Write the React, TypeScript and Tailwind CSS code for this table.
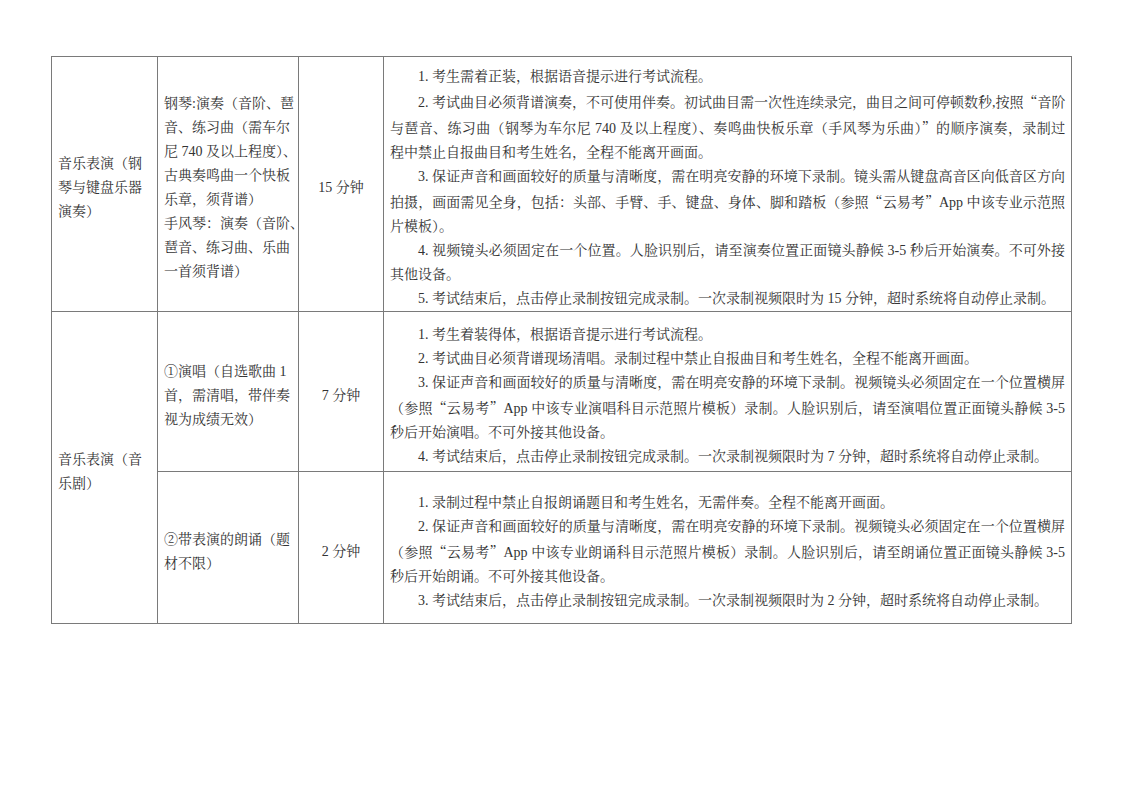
import type { ReactNode } from 'react';

const serif = "font-['Liberation_Serif','Noto_Serif_CJK_SC','Noto_Sans_CJK_SC',serif]";
const cell = 'border border-[#7a7a7a] align-middle px-[6px] pt-[8px] pb-0';

function Q({ c }: { c: string }) {
  return (
    <span className="font-['Noto_Serif_CJK_SC','Noto_Sans_CJK_SC',serif] [font-feature-settings:'fwid']">{c}</span>
  );
}

// one printed line of the notes column
function Line({ children, full, first }: { children: ReactNode; full?: boolean; first?: boolean }) {
  return (
    <div
      className={
        (full ? 'text-justify [text-align-last:justify] ' : '') +
        (first ? 'indent-[28px] ' : '') +
        'whitespace-nowrap'
      }
    >
      {children}
    </div>
  );
}

function Plain({ lines }: { lines: string[] }) {
  return (
    <div>
      {lines.map((l) => (
        <div key={l} className="whitespace-nowrap">
          {l}
        </div>
      ))}
    </div>
  );
}

export default function App() {
  return (
    <div className={`min-h-[794px] w-[1123px] bg-white pt-[56px] pl-[51px] text-[14px] leading-[24px] text-[#333] ${serif}`}>
      <table className="w-[1020px] table-fixed border-collapse">
        <colgroup>
          <col className="w-[106px]" />
          <col className="w-[141px]" />
          <col className="w-[85px]" />
          <col className="w-[688px]" />
        </colgroup>
        <tbody>
          <tr className="h-[255px]">
            <td className={cell}>
              <Plain lines={['音乐表演（钢', '琴与键盘乐器', '演奏）']} />
            </td>
            <td className={cell}>
              <Plain
                lines={[
                  '钢琴:演奏（音阶、琶',
                  '音、练习曲（需车尔',
                  '尼 740 及以上程度）、',
                  '古典奏鸣曲一个快板',
                  '乐章，须背谱）',
                  '手风琴：演奏（音阶、',
                  '琶音、练习曲、乐曲',
                  '一首须背谱）',
                ]}
              />
            </td>
            <td className={`${cell} text-center`}>15 分钟</td>
            <td className={cell}>
              <Line first>1. 考生需着正装，根据语音提示进行考试流程。</Line>
              <Line first full>
                2. 考试曲目必须背谱演奏，不可使用伴奏。初试曲目需一次性连续录完，曲目之间可停顿数秒,按照<Q c="“" />音阶
              </Line>
              <Line full>
                与琶音、练习曲（钢琴为车尔尼 740 及以上程度）、奏鸣曲快板乐章（手风琴为乐曲）<Q c="”" />的顺序演奏，录制过
              </Line>
              <Line>程中禁止自报曲目和考生姓名，全程不能离开画面。</Line>
              <Line first full>
                3. 保证声音和画面较好的质量与清晰度，需在明亮安静的环境下录制。镜头需从键盘高音区向低音区方向
              </Line>
              <Line full>
                拍摄，画面需见全身，包括：头部、手臂、手、键盘、身体、脚和踏板（参照<Q c="“" />云易考<Q c="”" />App 中该专业示范照
              </Line>
              <Line>片模板）。</Line>
              <Line first full>
                4. 视频镜头必须固定在一个位置。人脸识别后，请至演奏位置正面镜头静候 3-5 秒后开始演奏。不可外接
              </Line>
              <Line>其他设备。</Line>
              <Line first>5. 考试结束后，点击停止录制按钮完成录制。一次录制视频限时为 15 分钟，超时系统将自动停止录制。</Line>
            </td>
          </tr>
          <tr className="h-[160px]">
            <td className={cell} rowSpan={2}>
              <Plain lines={['音乐表演（音', '乐剧）']} />
            </td>
            <td className={cell}>
              <Plain lines={['①演唱（自选歌曲 1', '首，需清唱，带伴奏', '视为成绩无效）']} />
            </td>
            <td className={`${cell} text-center`}>7 分钟</td>
            <td className={cell}>
              <Line first>1. 考生着装得体，根据语音提示进行考试流程。</Line>
              <Line first>2. 考试曲目必须背谱现场清唱。录制过程中禁止自报曲目和考生姓名，全程不能离开画面。</Line>
              <Line first full>
                3. 保证声音和画面较好的质量与清晰度，需在明亮安静的环境下录制。视频镜头必须固定在一个位置横屏
              </Line>
              <Line full>
                （参照<Q c="“" />云易考<Q c="”" />App 中该专业演唱科目示范照片模板）录制。人脸识别后，请至演唱位置正面镜头静候 3-5
              </Line>
              <Line>秒后开始演唱。不可外接其他设备。</Line>
              <Line first>4. 考试结束后，点击停止录制按钮完成录制。一次录制视频限时为 7 分钟，超时系统将自动停止录制。</Line>
            </td>
          </tr>
          <tr className="h-[152px]">
            <td className={cell}>
              <Plain lines={['②带表演的朗诵（题', '材不限）']} />
            </td>
            <td className={`${cell} text-center`}>2 分钟</td>
            <td className={cell}>
              <Line first>1. 录制过程中禁止自报朗诵题目和考生姓名，无需伴奏。全程不能离开画面。</Line>
              <Line first full>
                2. 保证声音和画面较好的质量与清晰度，需在明亮安静的环境下录制。视频镜头必须固定在一个位置横屏
              </Line>
              <Line full>
                （参照<Q c="“" />云易考<Q c="”" />App 中该专业朗诵科目示范照片模板）录制。人脸识别后，请至朗诵位置正面镜头静候 3-5
              </Line>
              <Line>秒后开始朗诵。不可外接其他设备。</Line>
              <Line first>3. 考试结束后，点击停止录制按钮完成录制。一次录制视频限时为 2 分钟，超时系统将自动停止录制。</Line>
            </td>
          </tr>
        </tbody>
      </table>
    </div>
  );
}
